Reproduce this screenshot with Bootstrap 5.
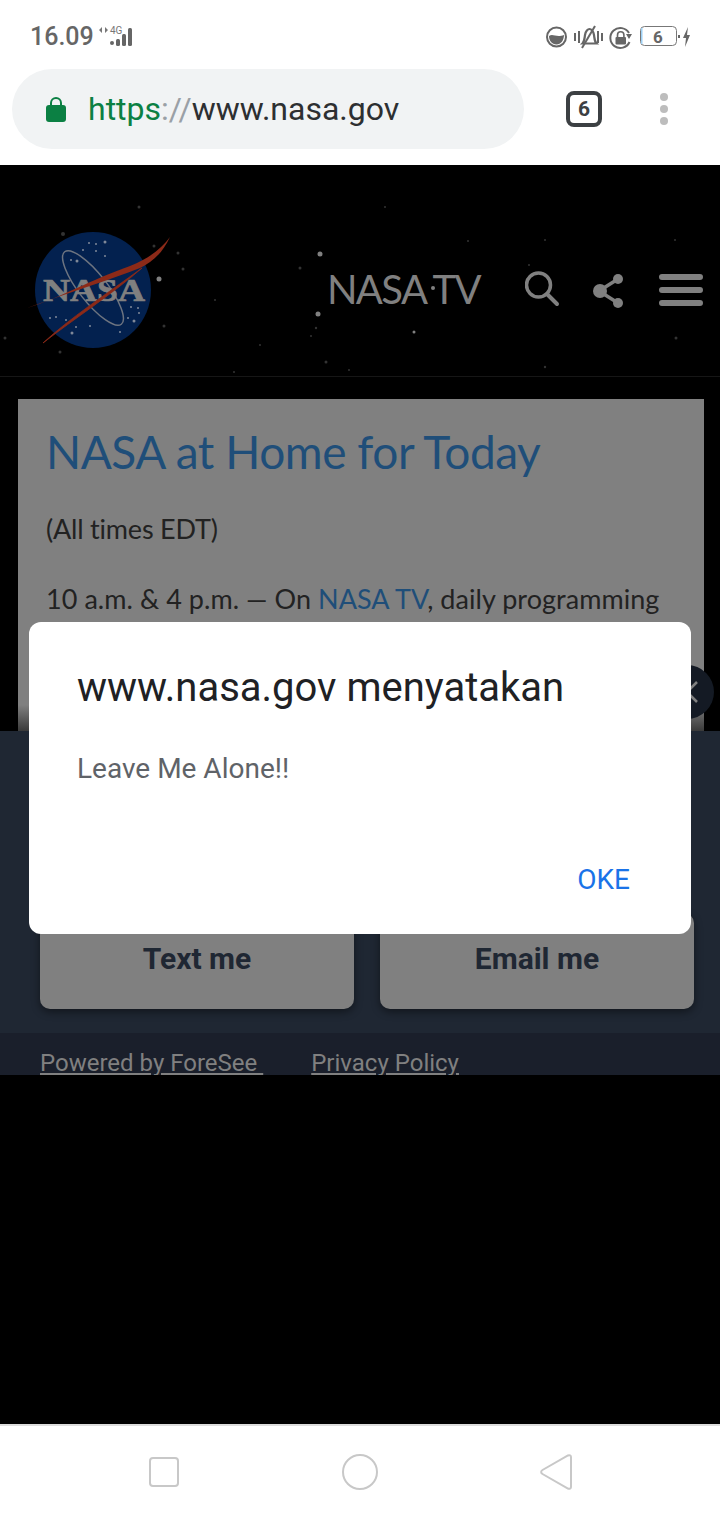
<!DOCTYPE html>
<html lang="en">
<head>
    <meta charset="UTF-8">
    <meta name="viewport" content="width=device-width, initial-scale=1.0">
    <title>www.nasa.gov</title>
    <link href="https://cdn.jsdelivr.net/npm/bootstrap@5.3.0/dist/css/bootstrap.min.css" rel="stylesheet">
    <style>
        body { height: 1520px; overflow: hidden; font-family: Roboto, sans-serif; background: #fff; }
        .status-row { height: 69px; padding: 0 30px; color: #666; }
        .status-time { font-size: 25px; font-weight: 500; line-height: 1; }
        .chrome-row { height: 96px; padding: 0 0 16px 12px; }
        .url-pill { width: 512px; height: 80px; background: #f1f3f4; border-radius: 40px; padding-left: 34px; font-size: 32px; color: #2d2f31; }
        .url-green { color: #0b8043; }
        .url-grey { color: #9aa0a6; }
        .tab-box { width: 36px; height: 36px; margin-left: 42px; border: 4px solid #3c4043; border-radius: 8px; color: #3c4043; font: 700 21px Roboto, sans-serif; }
        .more-dots { margin-left: 58px; }
        .page-area { position: relative; background: #000; }
        .site-head { position: relative; height: 212px; border-bottom: 1px solid #161616; padding: 0 16px 0 25px; }
        .star-field { position: absolute; left: 0; top: 0; }
        .site-logo, .head-link, .head-icons { position: relative; }
        .site-logo { margin-top: 42px; }
        .head-link { font: 400 40px Lato, sans-serif; color: #808080; margin-left: auto; margin-right: 45px; margin-top: 37px; letter-spacing: -1.6px; }
        .head-icons { margin-top: 39px; }
        .story-box { height: 332px; margin: 22px 16px 0 18px; padding: 25px 28px; overflow: hidden; background: linear-gradient(#808080 306px, #3a3a3a 332px); font-family: Lato, sans-serif; color: #222; }
        .story-title { font-size: 46px; font-weight: 400; line-height: 56px; color: #1f4e79; margin: 0 0 31px; letter-spacing: -.45px; }
        .story-line { font-size: 27px; line-height: 36px; margin: 0 0 34px; letter-spacing: -.2px; }
        .story-line-wide { letter-spacing: .05px; }
        .story-link { color: #1f4e79; text-decoration: none; }
        .survey-panel { height: 302px; background: #1f2733; padding: 0 26px 24px 40px; gap: 26px; }
        .survey-btn { flex: 1; height: 96px; padding-bottom: 6px; border-radius: 10px; background: #808080; color: #1f2733; font-size: 30px; font-weight: 700; box-shadow: 0 3px 8px rgba(0,0,0,.45); }
        .survey-foot { height: 42px; overflow: hidden; background: #1a1f2b; padding: 15px 0 0 40px; gap: 48px; color: #808080; font-size: 24px; line-height: 30px; }
        .survey-close { position: absolute; left: 660px; top: 500px; width: 54px; height: 54px; background: #141a24; }
        .alert-box { position: absolute; left: 29px; top: 457px; width: 662px; height: 312px; background: #fff; border-radius: 12px; padding: 42px 48px 0; }
        .alert-title { font-size: 40px; font-weight: 400; line-height: 48px; color: #202124; margin: 0 0 39px; }
        .alert-text { font-size: 28px; line-height: 36px; color: #5f6368; margin: 0; }
        .alert-ok { position: absolute; right: 61px; top: 241px; font-size: 28px; line-height: 34px; color: #1a73e8; }
        .page-fill { height: 349px; background: #000; }
        .nav-row { height: 96px; border-top: 2px solid #ddd; padding-bottom: 3px; }
        .nav-slot { width: 196px; }
    </style>
</head>
<body>

<div class="status-row d-flex align-items-center justify-content-between pt-1">
    <div class="d-flex align-items-start">
        <span class="status-time">16.09</span>
        <svg width="44" height="24" viewBox="0 0 44 24" class="ms-1">
            <path d="M4 3l-3 3 3 3zM7 3l3 3-3 3z" fill="#777"/>
            <text x="12" y="10" font-family="Roboto" font-size="10" fill="#777">4G</text>
            <circle cx="14" cy="19" r="2" fill="#666"/>
            <rect x="18" y="15" width="4" height="7" rx="1.5" fill="#666"/>
            <rect x="24" y="10" width="4" height="12" rx="1.5" fill="#666"/>
            <rect x="30" y="4" width="4" height="18" rx="1.5" fill="#666"/>
        </svg>
    </div>
    <svg width="146" height="26" viewBox="545 24 146 26" style="margin-right:-1px">
        <circle cx="556.500" cy="37" r="9.500" fill="none" stroke="#666" stroke-width="2"/>
        <path d="M549 36c4-3 7 2 15-1 0 5-3 9.500-7.500 9.500s-7.500-4-7.500-8.500z" fill="#666"/>
        <path d="M575 33v8M579 31v12M598 31v12M602 33v8" stroke="#666" stroke-width="2" fill="none"/>
        <path d="M582.500 43.500h14c-2-2-2-5-2.500-8.500-.5-4-3-6-4.500-6s-4 2-4.500 6c-.5 3.500-.5 6.500-2.500 8.500z" stroke="#666" stroke-width="2.200" fill="none"/>
        <path d="M582 48l13-22" stroke="#666" stroke-width="2" fill="none"/>
        <path d="M629 33a10 10 0 1 0 .5 9" stroke="#666" stroke-width="2" fill="none"/>
        <path d="M632 34h-6l3 5z" fill="#666"/>
        <rect x="615.500" y="37" width="10.500" height="7.500" rx="1" fill="#666"/>
        <path d="M617.500 37v-2a3.200 3.200 0 0 1 6.400 0v2" stroke="#666" stroke-width="1.600" fill="none"/>
        <rect x="640.500" y="26.500" width="36" height="19" rx="4" fill="none" stroke="#777"/>
        <rect x="641" y="28" width="1.500" height="16" fill="#9cd0f5"/>
        <text x="658" y="43" text-anchor="middle" font-family="Roboto" font-weight="700" font-size="17" fill="#666">6</text>
        <rect x="678" y="35" width="2" height="3" fill="#666"/>
        <path d="M688 27l-5 11h3l-1 9 5-12h-3z" fill="#666"/>
    </svg>
</div>

<div class="chrome-row d-flex align-items-center">
    <div class="url-pill d-flex align-items-center">
        <svg width="20" height="26" viewBox="0 0 20 26" class="flex-shrink-0 me-4">
            <path d="M5 11V7a5 5 0 0 1 10 0v4" fill="none" stroke="#0b8043" stroke-width="2"/>
            <rect y="9" width="20" height="17" rx="3" fill="#0b8043"/>
        </svg>
        <span style="margin-left:-2px"><span class="url-green">https</span><span class="url-grey">://</span>www.nasa.gov</span>
    </div>
    <div class="tab-box d-flex align-items-center justify-content-center">6</div>
    <svg class="more-dots" width="8" height="32" viewBox="0 0 8 32">
        <circle cx="4" cy="4" r="4" fill="#bdbdbd"/>
        <circle cx="4" cy="16" r="4" fill="#bdbdbd"/>
        <circle cx="4" cy="28" r="4" fill="#bdbdbd"/>
    </svg>
</div>

<div class="page-area">
    <div class="site-head d-flex align-items-center">
        <svg class="star-field" width="720" height="211" viewBox="0 165 720 211">
            <g fill="#808080">
                <circle cx="320" cy="254" r="2.500"/><circle cx="433" cy="288" r="2"/><circle cx="318" cy="314" r="2.500"/>
                <circle cx="159" cy="279" r="2.500"/><circle cx="414" cy="332" r="1.500"/>
            </g>
            <g fill="#333">
                <circle cx="326" cy="362" r="1.500"/><circle cx="349" cy="370" r="1"/><circle cx="545" cy="367" r="1.200"/>
                <circle cx="676" cy="338" r="1.500"/><circle cx="316" cy="328" r="1.200"/><circle cx="311" cy="336" r="1"/>
                <circle cx="529" cy="265" r="1"/><circle cx="63" cy="234" r="2"/><circle cx="139" cy="207" r="1.500"/>
                <circle cx="178" cy="253" r="1.500"/><circle cx="154" cy="246" r="1.500"/><circle cx="183" cy="269" r="1.500"/>
                <circle cx="5" cy="338" r="1.500"/><circle cx="60" cy="352" r="1.500"/><circle cx="164" cy="326" r="1.500"/>
                <circle cx="234" cy="372" r="1"/><circle cx="300" cy="268" r="1.500"/><circle cx="385" cy="207" r="1"/>
                <circle cx="545" cy="240" r="1"/><circle cx="260" cy="345" r="1"/><circle cx="215" cy="300" r="1"/>
                <circle cx="675" cy="240" r="1"/><circle cx="468" cy="241" r="1"/>
            </g>
        </svg>
        <svg class="site-logo" width="150" height="124" viewBox="25 230 150 124">
            <circle cx="93" cy="290" r="58" fill="#03214f"/>
            <ellipse cx="93" cy="288" rx="14" ry="46" transform="rotate(-38 93 288)" fill="none" stroke="#6d7480" stroke-width="1.500"/>
            <text x="43" y="301" textLength="102" lengthAdjust="spacingAndGlyphs" font-family="Liberation Serif" font-weight="700" font-size="31" fill="#808080" stroke="#808080" stroke-width=".7">NASA</text>
            <path d="M27 308C60 298 90 280 130 266 150 258 162 248 170 237 162 254 152 262 140 268 110 280 70 292 27 308z" fill="#8c2a18"/>
            <path d="M43 343C70 318 105 295 142 268 110 296 75 318 43 343z" fill="#8c2a18" stroke="#8c2a18" stroke-width=".8"/>
            <g fill="#7f8898">
                <circle cx="89" cy="243" r="1"/><circle cx="96" cy="244" r="1"/><circle cx="105" cy="242" r="1.500"/><circle cx="96" cy="251" r="1"/>
                <circle cx="83" cy="250" r="1"/><circle cx="105" cy="256" r="1"/><circle cx="77" cy="261" r="1.500"/><circle cx="71" cy="260" r="1"/>
                <circle cx="50" cy="318" r="1"/><circle cx="56" cy="317" r="1"/><circle cx="66" cy="320" r="1"/><circle cx="72" cy="333" r="1.500"/>
                <circle cx="76" cy="327" r="1"/><circle cx="90" cy="326" r="1"/><circle cx="131" cy="307" r="1"/><circle cx="138" cy="308" r="1"/>
                <circle cx="134" cy="321" r="1.500"/><circle cx="128" cy="318" r="1"/><circle cx="120" cy="332" r="1"/><circle cx="139" cy="313" r="1"/>
            </g>
        </svg>
        <span class="head-link">NASA TV</span>
        <svg class="head-icons" width="179" height="40" viewBox="525 270 179 40">
            <circle cx="538.500" cy="285" r="12" fill="none" stroke="#808080" stroke-width="3.500"/>
            <path d="M547 294l10 10" stroke="#808080" stroke-width="4" stroke-linecap="round"/>
            <path d="M599 291l19-12M599 291l19 12" stroke="#808080" stroke-width="3.500"/>
            <circle cx="600" cy="291" r="7" fill="#808080"/><circle cx="618" cy="279" r="5" fill="#808080"/><circle cx="618" cy="303" r="5" fill="#808080"/>
            <path d="M662 277h38M662 290h38M662 303h38" stroke="#808080" stroke-width="6" stroke-linecap="round"/>
        </svg>
    </div>

    <div class="story-box">
        <h1 class="story-title">NASA at Home for Today</h1>
        <p class="story-line">(All times EDT)</p>
        <p class="story-line story-line-wide">10 a.m. &amp; 4 p.m. — On <a class="story-link" href="#">NASA TV</a>, daily programming</p>
    </div>

    <div class="survey-panel d-flex align-items-end">
        <div class="survey-btn d-flex align-items-center justify-content-center">Text me</div>
        <div class="survey-btn d-flex align-items-center justify-content-center">Email me</div>
    </div>
    <div class="survey-foot d-flex">
        <span class="text-decoration-underline">Powered by ForeSee&nbsp;</span>
        <span class="text-decoration-underline">Privacy Policy</span>
    </div>
    <div class="page-fill"></div>

    <div class="survey-close rounded-circle d-flex align-items-center justify-content-center">
        <svg width="24" height="24" viewBox="0 0 24 24"><path d="M2 2l20 20M22 2L2 22" stroke="#808080" stroke-width="2.500"/></svg>
    </div>
    <div class="alert-box">
        <h2 class="alert-title">www.nasa.gov menyatakan</h2>
        <p class="alert-text">Leave Me Alone!!</p>
        <span class="alert-ok">OKE</span>
    </div>
</div>

<div class="nav-row d-flex align-items-center justify-content-center">
    <div class="nav-slot d-flex justify-content-center">
        <svg width="30" height="30" viewBox="0 0 30 30"><rect x="1" y="1" width="28" height="28" rx="3" fill="none" stroke="#c8c8c8" stroke-width="2"/></svg>
    </div>
    <div class="nav-slot d-flex justify-content-center">
        <svg width="38" height="38" viewBox="0 0 38 38"><circle cx="19" cy="19" r="17" fill="none" stroke="#c8c8c8" stroke-width="2"/></svg>
    </div>
    <div class="nav-slot d-flex justify-content-center">
        <svg width="32" height="36" viewBox="0 0 32 36"><path d="M28 1.500c1.500-.8 3 .2 3 1.500v30c0 1.300-1.500 2.300-3 1.500L2.500 20c-1.800-1-1.800-3 0-4z" fill="none" stroke="#c8c8c8" stroke-width="2"/></svg>
    </div>
</div>

<script src="https://cdn.jsdelivr.net/npm/bootstrap@5.3.0/dist/js/bootstrap.bundle.min.js"></script>
</body>
</html>
